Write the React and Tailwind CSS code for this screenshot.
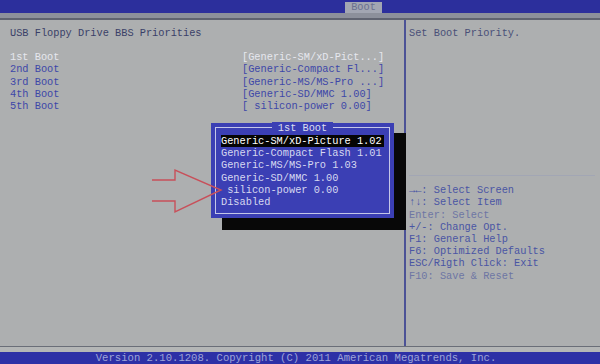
import React from 'react';

const bootRows = [
  { label: '1st Boot', value: '[Generic-SM/xD-Pict...]', active: true },
  { label: '2nd Boot', value: '[Generic-Compact Fl...]' },
  { label: '3rd Boot', value: '[Generic-MS/MS-Pro ...]' },
  { label: '4th Boot', value: '[Generic-SD/MMC 1.00]' },
  { label: '5th Boot', value: '[ silicon-power 0.00]' },
];

const popupItems = [
  'Generic-SM/xD-Picture 1.02',
  'Generic-Compact Flash 1.01',
  'Generic-MS/MS-Pro 1.03',
  'Generic-SD/MMC 1.00',
  ' silicon-power 0.00',
  'Disabled',
];

const helpRows = [
  ['\u2192\u2190', ': Select Screen'],
  ['\u2191\u2193', ': Select Item'],
  ['Enter', ': Select', true],
  ['+/-', ': Change Opt.'],
  ['F1', ': General Help'],
  ['F6', ': Optimized Defaults'],
  ['ESC/Rigth Click', ': Exit'],
  ['F10', ': Save & Reset', true],
];

function Arrow() {
  // outline arrow drawn on the photo
  return (
    <svg className="absolute left-[150px] top-[166px]" width="76" height="50" viewBox="0 0 76 50">
      <path
        d="M2 14 L25 14 L25 4 L71 24 L25 46 L25 35 L2 35"
        fill="none"
        stroke="#c8505a"
        strokeWidth="1.4"
        strokeLinejoin="miter"
      />
    </svg>
  );
}

export default function App() {
  return (
    <div
      className="relative w-[600px] h-[364px] overflow-hidden bg-[#adafb0] text-[10.3px] leading-[12.2px] whitespace-pre"
      style={{ fontFamily: '"Liberation Mono", "DejaVu Sans Mono", monospace' }}
    >
      {/* top bar */}
      <div className="h-[13px] bg-[#2c2f9c] flex items-end">
        <div className="ml-[345px] w-[37px] h-[11px] bg-[#a2a6b2] text-[#6a7090] flex items-center justify-center">
          Boot
        </div>
      </div>
      <div className="h-[5px] bg-[#8c909b]" />
      <div className="h-[2px] bg-[#5f6370]" />

      {/* main panes */}
      <div className="flex h-[326px]">
        <div className="w-[404px] pl-[10px] pt-[7px]">
          <div className="text-[#3a3f68]">USB Floppy Drive BBS Priorities</div>
          <div className="mt-[12px] flex flex-col">
            {bootRows.map((r) => (
              <div key={r.label} className={`flex ${r.active ? 'text-[#e6e7ee]' : 'text-[#3d47a8]'}`}>
                <span className="w-[232px]">{r.label}</span>
                <span>{r.value}</span>
              </div>
            ))}
          </div>
        </div>
        <div className="w-[2px] bg-[#4c5296]" />
        <div className="flex-1 flex flex-col pl-[3px] pt-[7px]">
          <div className="text-[#4a5078]">Set Boot Priority.</div>
          <div className="mt-[136px] mr-[5px] h-px bg-[#a2a6b4]" />
          <div className="mt-[8px] flex flex-col text-[#4a55a4]">
            {helpRows.map(([k, v, dim]) => (
              <div key={k} className={dim ? 'text-[#6e76a4]' : ''}>
                <span>{k}</span>
                <span>{v}</span>
              </div>
            ))}
          </div>
        </div>
      </div>

      <div className="h-px bg-[#6a6e78]" />
      <div className="h-[5px] bg-[#b4b6b6]" />
      {/* bottom bar */}
      <div className="h-[12px] bg-[#2d30a6] text-[#9ea4d8] text-[10.6px] flex items-center justify-center pr-[8px]">
        Version 2.10.1208. Copyright (C) 2011 American Megatrends, Inc.
      </div>

      {/* popup shadow */}
      <div className="absolute left-[222px] top-[133px] w-[184px] h-[97px] bg-[#080808]" />
      {/* popup */}
      <div className="absolute left-[211px] top-[123px] w-[183px] h-[95px] bg-[#3b3fb4] p-[4px]">
        <div className="relative h-full border border-[#c4c6e8] pt-[3px] px-[5px]">
          <div className="absolute -top-[6px] left-0 right-0 flex justify-center">
            <span className="bg-[#3b3fb4] px-[6px] text-[#dcdef0]">1st Boot</span>
          </div>
          <div className="mt-[4px] flex flex-col text-[#d6d8f0]">
            {popupItems.map((t, i) => (
              <div key={i} className={i === 0 ? 'bg-[#050505] text-white' : ''}>
                {t}
              </div>
            ))}
          </div>
        </div>
      </div>

      <Arrow />
    </div>
  );
}
